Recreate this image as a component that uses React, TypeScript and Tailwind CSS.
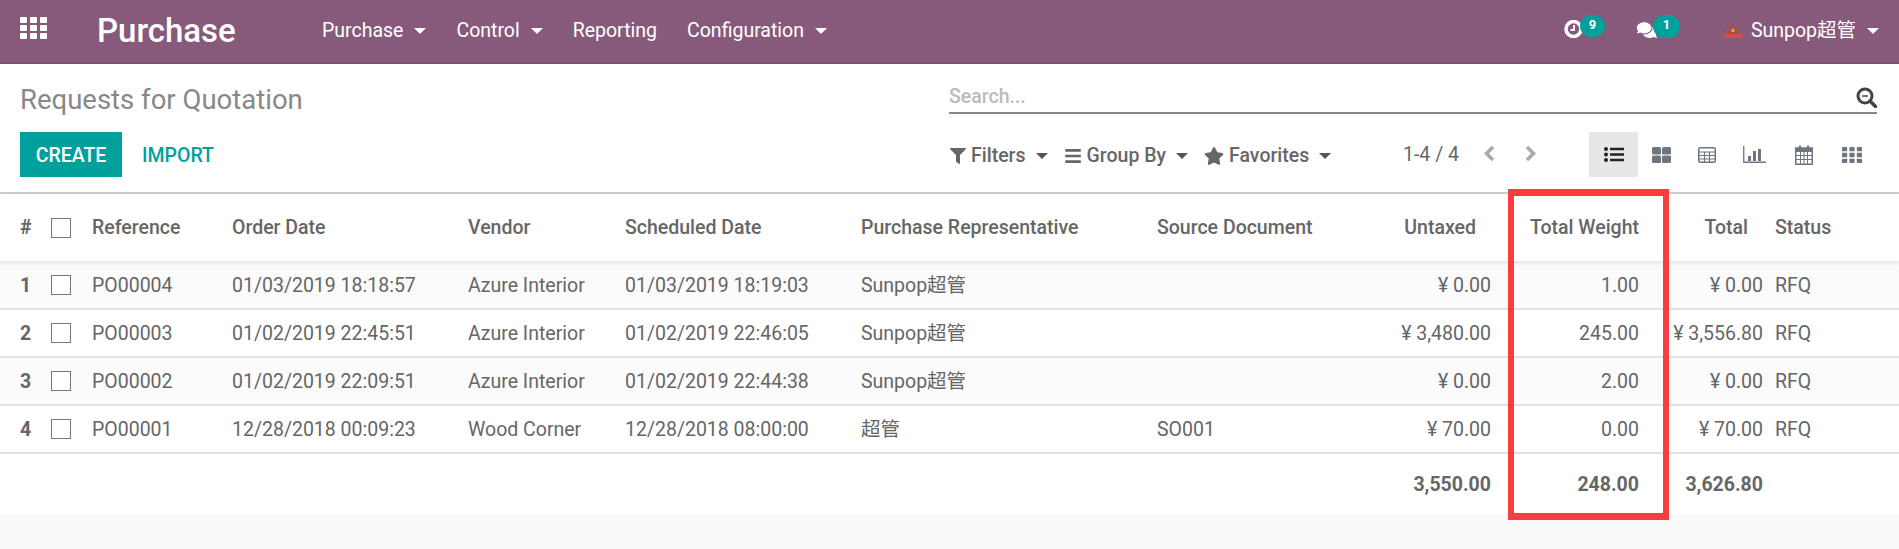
import { FaFilter, FaBars, FaStar, FaComments } from "react-icons/fa";

const rows = [
  { n: 1, ref: "PO00004", order: "01/03/2019 18:18:57", vendor: "Azure Interior", sched: "01/03/2019 18:19:03", rep: "Sunpop超管", src: "", untaxed: "¥ 0.00", weight: "1.00", total: "¥ 0.00" },
  { n: 2, ref: "PO00003", order: "01/02/2019 22:45:51", vendor: "Azure Interior", sched: "01/02/2019 22:46:05", rep: "Sunpop超管", src: "", untaxed: "¥ 3,480.00", weight: "245.00", total: "¥ 3,556.80" },
  { n: 3, ref: "PO00002", order: "01/02/2019 22:09:51", vendor: "Azure Interior", sched: "01/02/2019 22:44:38", rep: "Sunpop超管", src: "", untaxed: "¥ 0.00", weight: "2.00", total: "¥ 0.00" },
  { n: 4, ref: "PO00001", order: "12/28/2018 00:09:23", vendor: "Wood Corner", sched: "12/28/2018 08:00:00", rep: "超管", src: "SO001", untaxed: "¥ 70.00", weight: "0.00", total: "¥ 70.00" },
];

function Caret({ className }: { className: string }) {
  return <span className={`inline-block w-0 h-0 border-x-[6px] border-x-transparent border-t-[6px] ${className}`} />;
}

function NavItem({ label, caret = true }: { label: string; caret?: boolean }) {
  return (
    <span className="flex items-center gap-[11px] text-[19.5px]">
      {label}
      {caret && <Caret className="border-t-white" />}
    </span>
  );
}

function Dropdown({ icon, label }: { icon: React.ReactNode; label: string }) {
  return (
    <span className="flex items-center text-[19.5px] font-medium text-[#666]">
      {icon}
      <span className="ml-[5px]">{label}</span>
      <Caret className="ml-[10px] border-t-[#555]" />
    </span>
  );
}

function Checkbox() {
  return <span className="block w-5 h-5 border border-[#777] bg-white" />;
}

// 3x3 app grid, used in the navbar and for the pivot view button
function GridIcon({ className }: { className: string }) {
  return (
    <svg viewBox="0 0 27 22" preserveAspectRatio="none" className={className} fill="currentColor">
      {[0, 10, 20].map((x) =>
        [0, 8, 16].map((y) => <rect key={`${x}-${y}`} x={x} y={y} width="7" height="6" rx="1" />)
      )}
    </svg>
  );
}

export default function App() {
  return (
    <div className="min-h-[549px] bg-[#f9f9f9] font-['Roboto','Noto_Sans_CJK_SC',sans-serif] text-[#666]">
      {/* Navbar */}
      <header className="h-[64px] bg-[#875a7b] border-b-2 border-[#7a4f6e] flex items-center text-white">
        <GridIcon className="ml-[20px] w-[27px] h-[22px] -mt-[6px]" />
        <span className="ml-[50px] text-[33px] font-medium w-[225px]">Purchase</span>
        <nav className="flex gap-[30px]">
          <NavItem label="Purchase" />
          <NavItem label="Control" />
          <NavItem label="Reporting" caret={false} />
          <NavItem label="Configuration" />
        </nav>
        <div className="ml-auto flex items-center mr-[20px]">
          <span className="relative w-[19px] h-[18px] mr-[53px] -mt-[4px]">
            <svg viewBox="0 0 19 18" className="w-[19px] h-[18px]">
              <circle cx="9.500" cy="9" r="7.500" fill="none" stroke="white" strokeWidth="3.500" />
              <path d="M10 5v5H6.500" fill="none" stroke="white" strokeWidth="2" />
            </svg>
            <span className="absolute left-[16px] -top-[5px] w-[25px] h-[22px] rounded-full bg-[#00a09d] text-[13px] font-bold text-center leading-[20px]">9</span>
          </span>
          <span className="relative w-[22px] h-[18px] mr-[65px] -mt-[3px]">
            <FaComments className="w-[22px] h-[18px]" />
            <span className="absolute left-[17px] -top-[6px] w-[27px] h-[23px] rounded-full bg-[#00a09d] text-[13px] font-bold text-center leading-[20px]">1</span>
          </span>
          <svg viewBox="0 0 20 17" className="w-[20px] h-[17px] mr-[8px] -mt-[2px]">
            <rect x="0" y="12" width="20" height="4" fill="#c8504f" />
            <path d="M4 12 L10 4 L16 12 Z" fill="#a8453c" />
            <circle cx="10" cy="8.500" r="2" fill="#f0a020" />
            <path d="M3 1l3 3M17 1l-3 3M10 0v3" stroke="#b0413e" strokeWidth="1.500" />
          </svg>
          <span className="text-[19.5px]">Sunpop超管</span>
          <Caret className="ml-[11px] border-t-white" />
        </div>
      </header>

      {/* Control panel */}
      <section className="h-[130px] bg-white border-b-2 border-[#ccc] pl-[20px] pr-[22px] flex">
        <div className="w-[929px]">
          <h1 className="mt-[18px] h-[50px] text-[27.5px] leading-[36px] text-[#888]">Requests for Quotation</h1>
          <div className="flex items-center">
            <button className="w-[102px] h-[45px] pt-[2px] bg-[#00a09d] text-white text-[19.5px] font-medium">CREATE</button>
            <button className="ml-[20px] pt-[2px] text-[#00a09d] text-[19.5px] font-medium">IMPORT</button>
          </div>
        </div>
        <div className="flex-1 min-w-0">
          <div className="mt-[19px] h-[31px] pb-[2px] border-b-2 border-[#888] flex items-center justify-between">
            <span className="text-[19.5px] text-[#bbb] font-medium">Search...</span>
            <svg viewBox="0 0 21 21" className="w-[21px] h-[21px] text-[#444] mt-[2px]">
              <circle cx="9" cy="9" r="7" fill="none" stroke="currentColor" strokeWidth="3" />
              <path d="M14 14l5.500 5.500" stroke="currentColor" strokeWidth="3.500" strokeLinecap="round" />
              <path d="M6 9h6" stroke="currentColor" strokeWidth="1.500" />
            </svg>
          </div>
          <div className="mt-[18px] flex items-center h-[45px]">
            <div className="ml-[1px] mt-[2px] flex gap-[16px] w-[453px]">
              <Dropdown icon={<FaFilter className="w-[16px] h-[16px]" />} label="Filters" />
              <Dropdown icon={<FaBars className="w-[18px] h-[18px]" />} label="Group By" />
              <Dropdown icon={<FaStar className="w-[20px] h-[18px]" />} label="Favorites" />
            </div>
            <span className="text-[19.5px] text-[#666] w-[80px] mt-[1px]">1-4 / 4</span>
            <svg viewBox="0 0 12 17" className="w-[12px] h-[17px] -mt-[2px]">
              <path d="M10 2 L3.500 8.500 L10 15" fill="none" stroke="#aaa" strokeWidth="3.500" />
            </svg>
            <svg viewBox="0 0 12 17" className="ml-[30px] w-[12px] h-[17px] -mt-[2px]">
              <path d="M2 2 L8.500 8.500 L2 15" fill="none" stroke="#aaa" strokeWidth="3.500" />
            </svg>
            <div className="ml-[52px] flex items-center text-[#6e7581]">
              <span className="w-[49px] h-[45px] bg-[#e7e7e7] flex items-center justify-center text-[#222]">
                <svg viewBox="0 0 20 15" className="w-[20px] h-[15px]" fill="currentColor">
                  <circle cx="2" cy="2" r="2" />
                  <circle cx="2" cy="7.500" r="2" />
                  <circle cx="2" cy="13" r="2" />
                  <rect x="6" y="0.750" width="14" height="2.500" />
                  <rect x="6" y="6.250" width="14" height="2.500" />
                  <rect x="6" y="11.750" width="14" height="2.500" />
                </svg>
              </span>
              <svg viewBox="0 0 19 16" className="ml-[14px] w-[19px] h-[16px]" fill="currentColor">
                <rect width="9" height="7.500" rx="1.500" />
                <rect x="10" width="9" height="7.500" rx="1.500" />
                <rect y="8.500" width="9" height="7.500" rx="1.500" />
                <rect x="10" y="8.500" width="9" height="7.500" rx="1.500" />
              </svg>
              <svg viewBox="0 0 18 16" className="ml-[27px] w-[18px] h-[16px]">
                <rect x="0.750" y="0.750" width="16.500" height="14.500" rx="1.500" fill="none" stroke="currentColor" strokeWidth="1.500" />
                <path d="M1 5h16M1 8.500h16M1 12h16M6.500 5v10M11.500 5v10" fill="none" stroke="currentColor" strokeWidth="1.200" />
              </svg>
              <svg viewBox="0 0 23 17" className="ml-[27px] w-[23px] h-[17px]">
                <path d="M0.750 0v16.250H23" fill="none" stroke="currentColor" strokeWidth="1.300" />
                <path d="M5 10h3v5H5zM10 5h3v10h-3zM15 3h3v12h-3z" fill="currentColor" />
              </svg>
              <svg viewBox="0 0 18 20" className="ml-[29px] w-[18px] h-[20px]">
                <path d="M0.750 3h16.500v16.250H0.750z" fill="none" stroke="currentColor" strokeWidth="1.500" />
                <path d="M1 3h16v4H1z" fill="currentColor" />
                <path d="M5 0.500v5M13 0.500v5" stroke="currentColor" strokeWidth="2.200" />
                <path d="M1 10.500h16M1 14.500h16M5.500 7v12M9 7v12M12.500 7v12" stroke="currentColor" strokeWidth="1" />
              </svg>
              <GridIcon className="ml-[29px] w-[20px] h-[16px]" />
            </div>
          </div>
        </div>
      </section>

      {/* List */}
      <div className="relative">
        <table className="w-full table-fixed border-collapse bg-white text-[19.5px] text-[#666]">
          <colgroup>
            <col className="w-[45px]" />
            <col className="w-[41px]" />
            <col className="w-[140px]" />
            <col className="w-[236px]" />
            <col className="w-[157px]" />
            <col className="w-[236px]" />
            <col className="w-[296px]" />
            <col className="w-[210px]" />
            <col className="w-[136px]" />
            <col className="w-[147px]" />
            <col className="w-[125px]" />
            <col />
          </colgroup>
          <thead>
            <tr className="h-[67px] font-medium shadow-[0_2px_4px_rgba(0,0,0,0.1)] relative">
              <th className="pl-[20px] text-left font-bold">#</th>
              <th className="pl-[6px]"><Checkbox /></th>
              {["Reference", "Order Date", "Vendor", "Scheduled Date", "Purchase Representative", "Source Document"].map((h) => (
                <th key={h} className="pl-[6px] text-left font-medium whitespace-nowrap">{h}</th>
              ))}
              <th className="pr-[21px] text-right font-medium">Untaxed</th>
              <th className="pr-[5px] text-right font-medium">Total Weight</th>
              <th className="pr-[21px] text-right font-medium">Total</th>
              <th className="pl-[6px] text-left font-medium">Status</th>
            </tr>
          </thead>
          <tbody>
            {rows.map((r) => (
              <tr key={r.n} className="h-[48px] border-b-2 border-[#e2e2e2] odd:bg-[#fbfbfb]">
                <td className="pl-[20px] pt-[2px] font-bold">{r.n}</td>
                <td className="pl-[6px]"><Checkbox /></td>
                <td className="pl-[6px] pt-[2px]">{r.ref}</td>
                <td className="pl-[6px] pt-[2px] whitespace-nowrap">{r.order}</td>
                <td className="pl-[6px] pt-[2px] whitespace-nowrap">{r.vendor}</td>
                <td className="pl-[6px] pt-[2px] whitespace-nowrap">{r.sched}</td>
                <td className="pl-[6px] pt-[2px]">{r.rep}</td>
                <td className="pl-[6px] pt-[2px]">{r.src}</td>
                <td className="pr-[6px] pt-[2px] text-right whitespace-nowrap">{r.untaxed}</td>
                <td className="pr-[5px] pt-[2px] text-right">{r.weight}</td>
                <td className="pr-[6px] pt-[2px] text-right whitespace-nowrap">{r.total}</td>
                <td className="pl-[6px] pt-[2px]">RFQ</td>
              </tr>
            ))}
            <tr className="h-[61px] font-bold">
              <td colSpan={8} />
              <td className="pr-[6px] pt-[1px] text-right">3,550.00</td>
              <td className="pr-[5px] pt-[1px] text-right">248.00</td>
              <td className="pr-[6px] pt-[1px] text-right">3,626.80</td>
              <td />
            </tr>
          </tbody>
        </table>
        {/* Red highlight drawn over the Total Weight column */}
        <div className="absolute left-[1508px] -top-[5px] w-[161px] h-[331px] border-x-[6px] border-y-[7px] border-[#f83c3f] pointer-events-none" />
      </div>
    </div>
  );
}
